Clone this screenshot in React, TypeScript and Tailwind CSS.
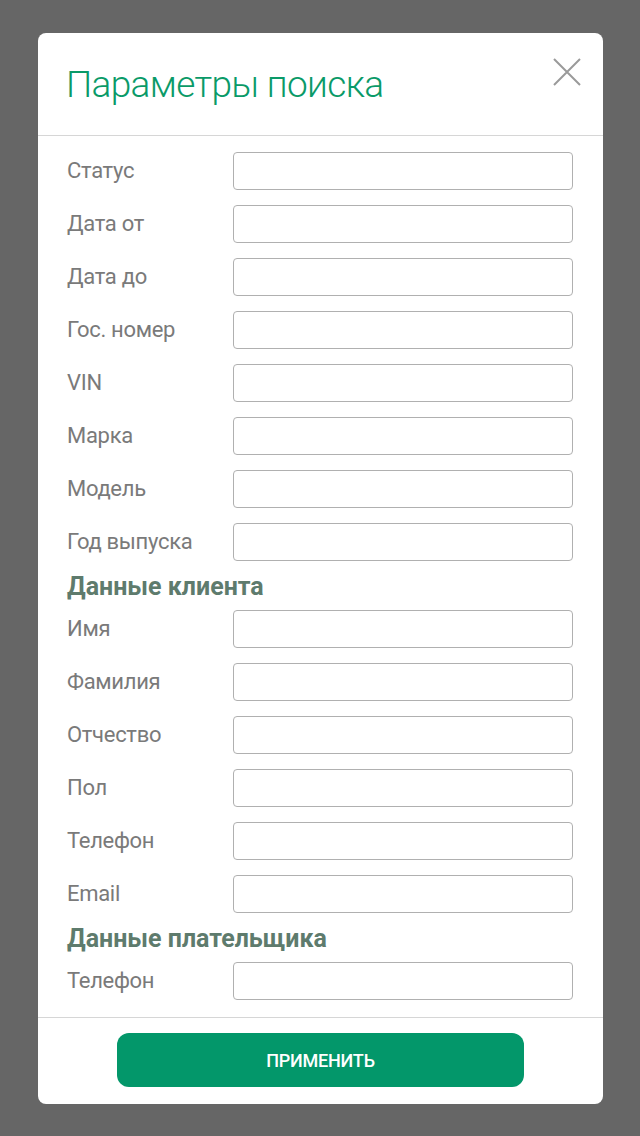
type Item = { kind: "field"; label: string } | { kind: "section"; title: string };

const items: Item[] = [
  { kind: "field", label: "Статус" },
  { kind: "field", label: "Дата от" },
  { kind: "field", label: "Дата до" },
  { kind: "field", label: "Гос. номер" },
  { kind: "field", label: "VIN" },
  { kind: "field", label: "Марка" },
  { kind: "field", label: "Модель" },
  { kind: "field", label: "Год выпуска" },
  { kind: "section", title: "Данные клиента" },
  { kind: "field", label: "Имя" },
  { kind: "field", label: "Фамилия" },
  { kind: "field", label: "Отчество" },
  { kind: "field", label: "Пол" },
  { kind: "field", label: "Телефон" },
  { kind: "field", label: "Email" },
  { kind: "section", title: "Данные плательщика" },
  { kind: "field", label: "Телефон" },
];

export default function App() {
  return (
    <div
      className="min-h-[1136px] w-full bg-[#666666] pt-[33px] pl-[38px]"
      style={{ fontFamily: "Roboto, 'Noto Sans', sans-serif" }}
    >
      <div className="w-[565px] overflow-hidden rounded-[8px] bg-white">
        <div className="relative flex h-[103px] items-center border-b border-[#d6d6d6] pl-[28px]">
          <h1 className="text-[37px] font-light leading-none tracking-[-0.65px] text-[#0a9a68]">
            Параметры поиска
          </h1>
          <button className="absolute right-[22px] top-[25px]">
            <svg width="28" height="28" viewBox="0 0 28 28" fill="none">
              <path d="M1 1L27 27M27 1L1 27" stroke="#9a9a9a" strokeWidth="2" />
            </svg>
          </button>
        </div>

        <div className="flex flex-col gap-[15px] pb-[17px] pl-[29px] pr-[30px] pt-[16px]">
          {items.map((it, i) =>
            it.kind === "section" ? (
              <div
                key={i}
                className="flex h-[19px] items-center text-[25px] font-bold leading-none text-[#5e7b6d]"
              >
                <span className="translate-y-[1px]">{it.title}</span>
              </div>
            ) : (
              <div key={i} className="flex h-[38px] items-center">
                <label className="w-[166px] text-[22px] leading-none tracking-[-0.3px] text-[#7a7a7a]">
                  {it.label}
                </label>
                <input
                  type="text"
                  className="h-[38px] flex-1 rounded-[4px] border border-[#b0b0b0] bg-white px-2 text-[18px] outline-none"
                />
              </div>
            )
          )}
        </div>

        <div className="flex justify-center border-t border-[#d6d6d6] pb-[17px] pt-[15px]">
          <button className="h-[54px] w-[407px] rounded-[12px] bg-[#03976a] text-[18px] font-medium tracking-[-0.2px] text-white">
            ПРИМЕНИТЬ
          </button>
        </div>
      </div>
    </div>
  );
}
